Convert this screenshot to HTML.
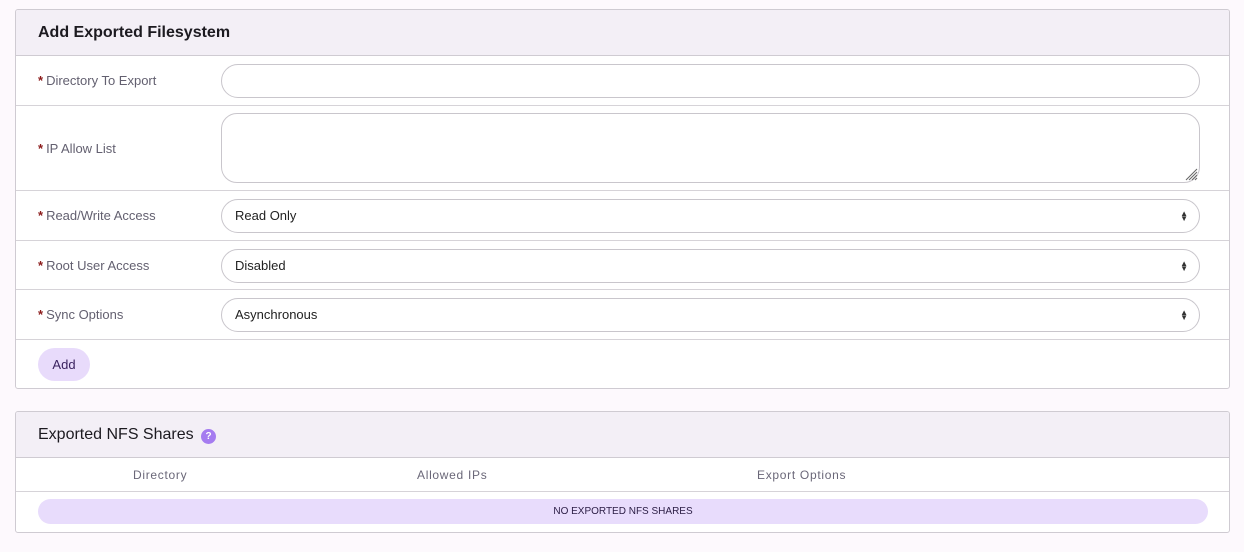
<!DOCTYPE html>
<html><head><style>
*{box-sizing:border-box;margin:0;padding:0}
body{width:1244px;height:552px;background:#fdf9fd;font-family:"Liberation Sans",sans-serif;position:relative;overflow:hidden}
.card{position:absolute;left:15px;width:1215px;background:#fff;border:1px solid #cfcbd2;border-radius:3px;overflow:hidden}
.hd{background:#f3eff6;border-bottom:1px solid #cfcbd2;padding-left:22px;color:#1c1a20}
.row{position:relative;border-bottom:1px solid #d6d3d8}
.lbl{position:absolute;left:22px;font-size:13px;color:#636070}
.lbl b{color:#8b1a1a;font-weight:bold;margin-right:3px}
.in{position:absolute;left:205px;width:979px;border:1px solid #c9c6cc;border-radius:17px;background:#fff;font-size:13px;color:#222;padding-left:13px}
.arr{position:absolute;right:11px;top:50%;transform:translateY(-50%);font-size:8px;line-height:5px;color:#333;text-align:center}
</style></head><body>
<div class="card" style="top:9px;height:380px">
 <div class="hd" style="height:46px;line-height:46px;font-size:16px;font-weight:bold">Add Exported Filesystem</div>
 <div class="row" style="height:50px"><div class="lbl" style="top:17px"><b>*</b>Directory To Export</div><div class="in" style="top:8px;height:34px"></div></div>
 <div class="row" style="height:85px"><div class="lbl" style="top:35px"><b>*</b>IP Allow List</div><div class="in" style="top:7px;height:70px;border-radius:16px">
  <svg style="position:absolute;right:1px;bottom:1px" width="14" height="14"><path d="M13 2L2 13M13 5L5 13M13 8L8 13M13 11L11 13" stroke="#666" stroke-width="1"/></svg></div></div>
 <div class="row" style="height:50px"><div class="lbl" style="top:17px"><b>*</b>Read/Write Access</div><div class="in" style="top:8px;height:34px;line-height:32px">Read Only<div class="arr">▲<br>▼</div></div></div>
 <div class="row" style="height:49px"><div class="lbl" style="top:17px"><b>*</b>Root User Access</div><div class="in" style="top:8px;height:34px;line-height:32px">Disabled<div class="arr">▲<br>▼</div></div></div>
 <div class="row" style="height:50px"><div class="lbl" style="top:17px"><b>*</b>Sync Options</div><div class="in" style="top:8px;height:34px;line-height:32px">Asynchronous<div class="arr">▲<br>▼</div></div></div>
 <div style="position:absolute;left:22px;top:338px;width:52px;height:33px;border-radius:17px;background:#e8dbfb;color:#3b2360;font-size:13px;text-align:center;line-height:33px">Add</div>
</div>
<div class="card" style="top:411px;height:122px">
 <div class="hd" style="height:46px;line-height:46px;font-size:16px">Exported NFS Shares <span style="display:inline-block;width:15px;height:15px;margin-left:3px;border-radius:50%;background:#a57cf0;color:#fff;font-size:10px;line-height:15px;text-align:center;font-weight:bold;vertical-align:0px">?</span></div>
 <div style="height:34px;border-bottom:1px solid #d6d3d8;position:relative;font-size:12px;color:#6a6778;letter-spacing:.7px">
  <span style="position:absolute;left:117px;top:10px">Directory</span>
  <span style="position:absolute;left:401px;top:10px">Allowed IPs</span>
  <span style="position:absolute;left:741px;top:10px">Export Options</span>
 </div>
 <div style="position:absolute;left:22px;top:87px;width:1170px;height:25px;border-radius:13px;background:#e8dcfc;color:#2a1c44;font-size:10px;text-align:center;line-height:25px">NO EXPORTED NFS SHARES</div>
</div>
</body></html>
